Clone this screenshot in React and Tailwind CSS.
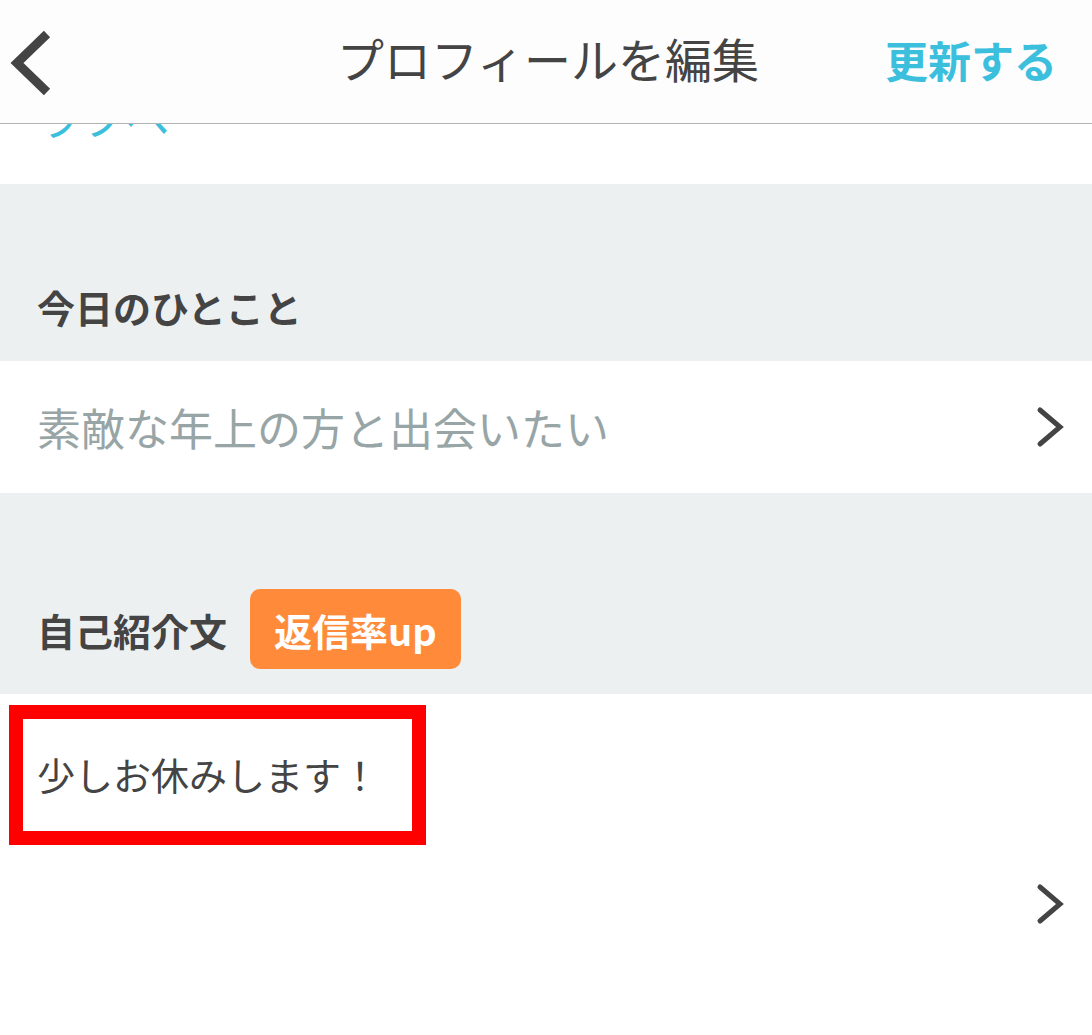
const font = { fontFamily: '"Noto Sans CJK JP", "Noto Sans", sans-serif' };

function ChevronRight() {
  return (
    <svg width="28" height="42" viewBox="0 0 28 42" className="shrink-0">
      <polyline
        points="4,4 24,21 4,38"
        fill="none"
        stroke="#444"
        strokeWidth="5"
        strokeLinecap="round"
        strokeLinejoin="miter"
      />
    </svg>
  );
}

function BackIcon() {
  return (
    <svg width="44" height="66" viewBox="0 0 44 66">
      <polyline
        points="38,4 8,33 38,62"
        fill="none"
        stroke="#444"
        strokeWidth="9"
        strokeLinecap="butt"
        strokeLinejoin="miter"
      />
    </svg>
  );
}

export default function App() {
  return (
    <div className="w-[1092px] h-[1035px] bg-white overflow-hidden" style={font}>
      {/* header */}
      <div className="h-[124px] bg-[#fdfdfd] border-b border-[#b3b3b3] grid grid-cols-[1fr_auto_1fr] items-center">
        <div className="pl-[9px] pt-[2px]">
          <BackIcon />
        </div>
        <div className="text-[47px] text-[#444] ml-[4px] pb-[6px]">プロフィールを編集</div>
        <div className="flex justify-end pr-[35px] pb-[4px]">
          <span className="text-[43px] font-bold text-[#3bbfdd]">更新する</span>
        </div>
      </div>

      {/* link partly hidden under the header */}
      <div className="h-[60px] overflow-hidden">
        <div className="mt-[-37px] pl-[37px] text-[44px] leading-[60px] text-[#3bbfdd]">ラフヘ</div>
      </div>

      {/* 今日のひとこと */}
      <div className="h-[177px] bg-[#ecf0f1] flex items-end pl-[37px] pb-[32px]">
        <span className="text-[38px] font-bold text-[#444] leading-[44px]">今日のひとこと</span>
      </div>
      <div className="h-[132px] flex items-center justify-between pl-[37px] pr-[28px]">
        <span className="text-[44px] text-[#98a5a6]">素敵な年上の方と出会いたい</span>
        <ChevronRight />
      </div>

      {/* 自己紹介文 */}
      <div className="h-[201px] bg-[#ecf0f1] flex items-end pl-[37px] pb-[25px]">
        <div className="flex items-center gap-[23px]">
          <span className="text-[38px] font-bold text-[#444]">自己紹介文</span>
          <span className="h-[80px] px-[24px] rounded-[10px] bg-[#ff8b3a] text-white text-[38px] font-bold flex items-center">
            返信率up
          </span>
        </div>
      </div>
      <div className="pt-[11px] pl-[9px] pr-[28px]">
        <div className="w-[417px] h-[140px] border-[14px] border-[#ff0000] flex items-center pl-[14px] pb-[4px]">
          <span className="text-[38px] text-[#444]">少しお休みします！</span>
        </div>
        <div className="flex justify-end mt-[38px]">
          <ChevronRight />
        </div>
      </div>
    </div>
  );
}
